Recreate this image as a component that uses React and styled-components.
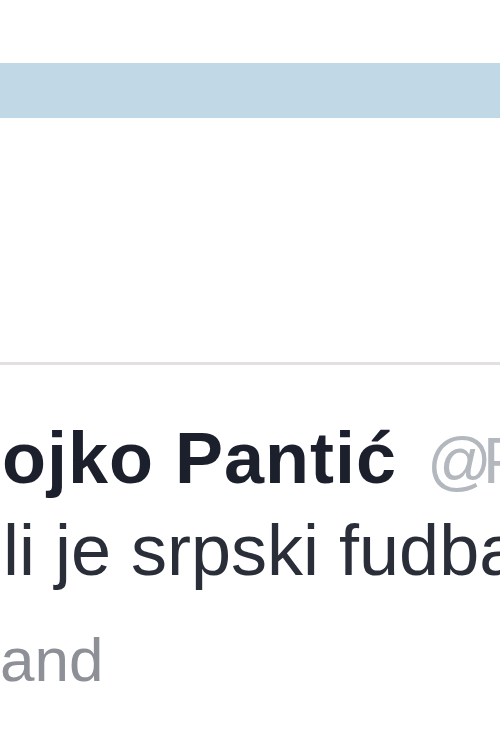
import styled, { createGlobalStyle } from "styled-components"

const GlobalStyle = createGlobalStyle`
    html, body {
        margin: 0;
        padding: 0;
        background: #ffffff;
    }
`

const Page = styled.div`
    width: 500px;
    height: 750px;
    overflow: hidden;
    background: #ffffff;
    display: flex;
    flex-direction: column;
    font-family: "Liberation Sans", Arial, sans-serif;
`

const Header = styled.div`
    padding-top: 63px;
    height: 365px;
    box-sizing: border-box;
    border-bottom: 3px solid #e4e0e0;
`

const SearchBar = styled.div`
    height: 55px;
    background: #c1d8e6;
`

const Tweet = styled.div`
    padding-top: 47px;
    display: flex;
    flex-direction: column;
`

const NameRow = styled.div`
    display: flex;
    align-items: baseline;
    gap: 30px;
    height: 92px;
    line-height: 92px;
    white-space: nowrap;
    padding-left: 2px;
`

const Name = styled.span`
    font-size: 72px;
    font-weight: 700;
    letter-spacing: 1px;
    color: #1c1f2c;
`

const Handle = styled.span`
    font-size: 64px;
    font-weight: 400;
    color: #b3b8be;
`

const At = styled.span`
    letter-spacing: -9px;
`

const Text = styled.div`
    font-size: 72px;
    line-height: 92px;
    color: #2a2e38;
    white-space: nowrap;
    padding-left: 3px;
`

const Expand = styled.div`
    margin-top: 24px;
    font-size: 62px;
    line-height: 80px;
    color: #8d9096;
    white-space: nowrap;
`

const App = () => {
    return (
        <>
            <GlobalStyle />
            <Page>
                <Header>
                    <SearchBar />
                </Header>
                <Tweet>
                    <NameRow>
                        <Name>ojko Pantić</Name>
                        <Handle><At>@</At>Pantic</Handle>
                    </NameRow>
                    <Text>li je srpski fudbal</Text>
                    <Expand>and</Expand>
                </Tweet>
            </Page>
        </>
    )
}

export default App
